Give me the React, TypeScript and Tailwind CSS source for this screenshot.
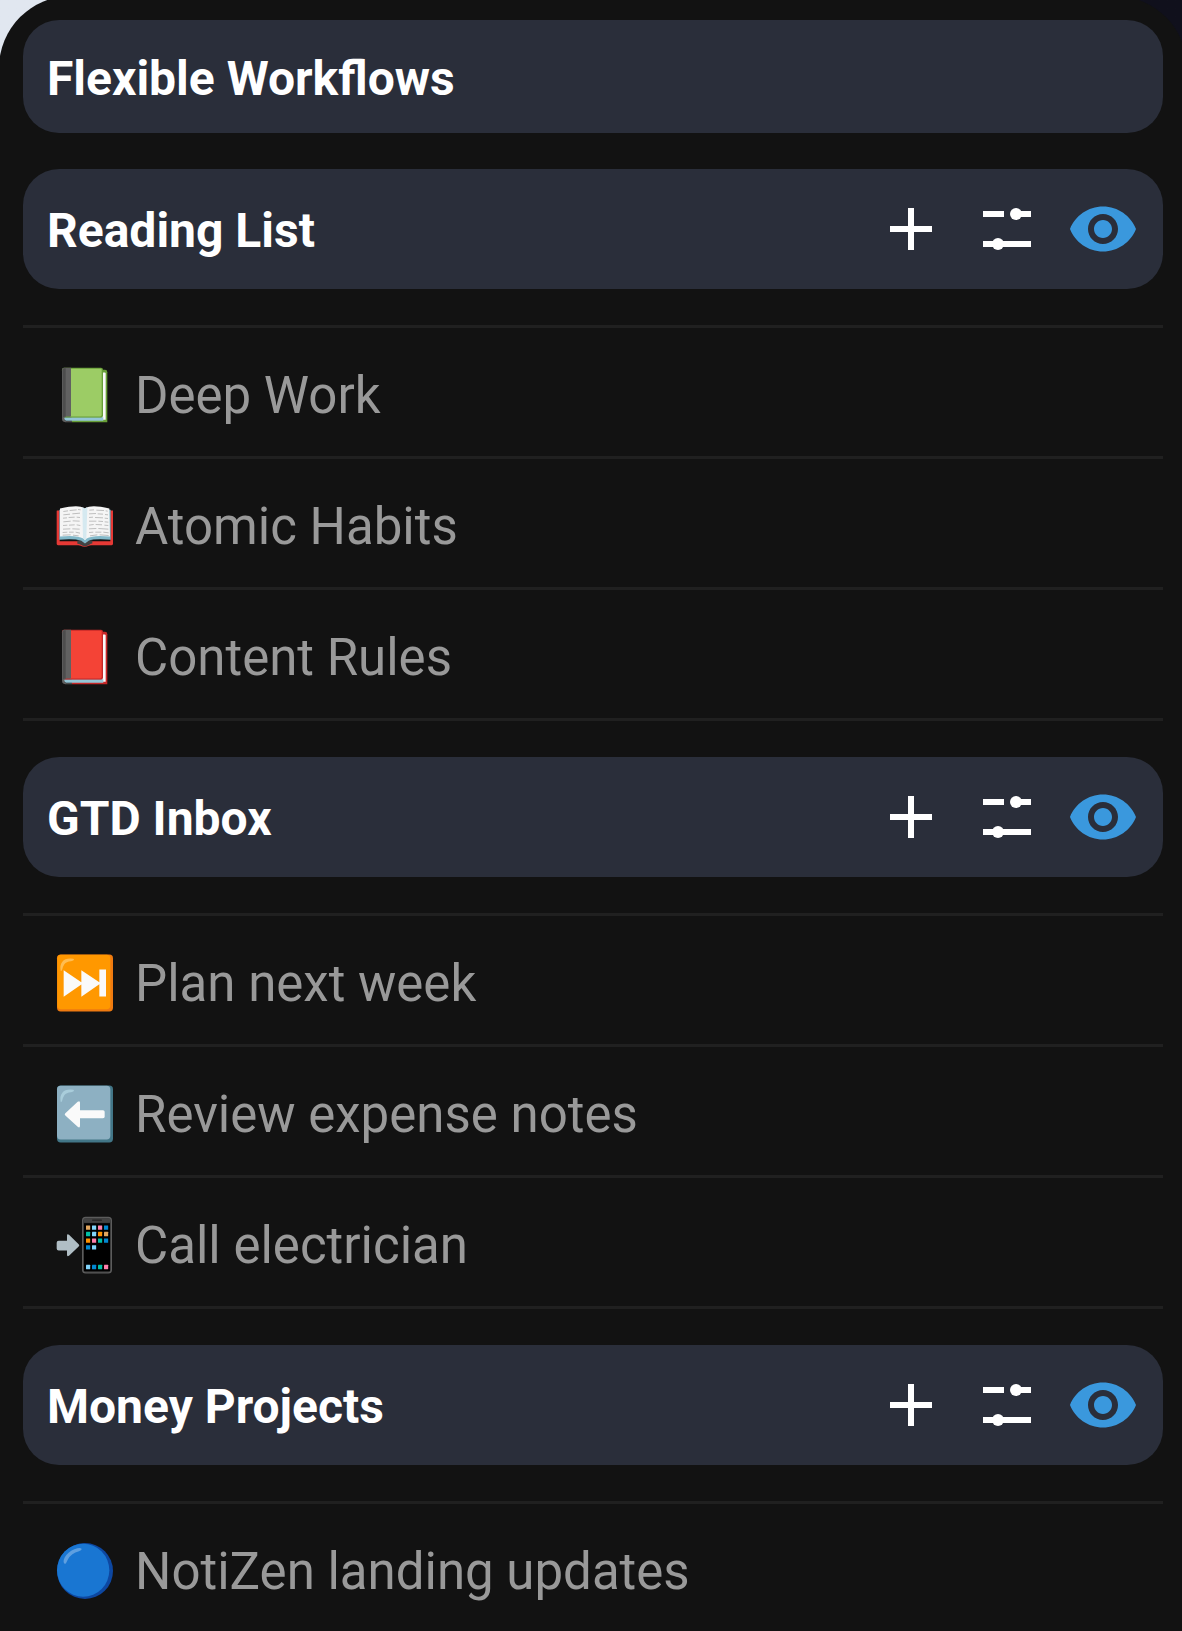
import type { ReactNode } from "react";

type Item = { icon: ReactNode; title: string };
type Section = { title: string; items: Item[] };

const Emoji = ({ top, children }: { top: number; children: ReactNode }) => (
  <svg
    viewBox={`48 ${top} 174 174`}
    className="w-[58px] h-[58px] shrink-0 mt-[5px]"
    aria-hidden="true"
  >
    {children}
  </svg>
);

const Book = ({ cover, edge }: { cover: string; edge: string }) => (
  <Emoji top={46.5}>
    <path d="M80 58h115q7 0 7 7v150H96z" fill={edge} />
    <path d="M187 66h7q3 0 3 4v138h-10z" fill="#fafafa" />
    <path d="M72 200h118v11H78q-6-1-6-6z" fill="#94c6d6" />
    <path d="M72 52h111q6 0 6 6v136q0 7-7 7H74q-8 0-8-6V59q0-7 6-7z" fill={edge} />
    <path d="M90 55h92q3 0 3 4v134q0 5-5 5H90z" fill={cover} />
    <path d="M72 52h21v146H78q-5 0-5 7 0 6 5 7h18v3H76q-10 0-10-10V59q0-7 6-7z" fill="#616161" />
    <path d="M72 53h5v146h-5q-4 2-4 5V59q0-5 4-6z" fill="#4d4d4d" />
  </Emoji>
);

const OpenBook = () => (
  <Emoji top={49.5}>
    <path d="M51 90h8v92h152V90h8v100q0 4-4 4h-62q-4 0-7 2-5 3-12 3t-12-3q-3-2-7-2H54q-4 0-4-4V93q0-3 1-3z" fill="#e53935" />
    <path d="M112 180h45v9q-5 0-9 4-6 4-13 4t-13-4q-4-3-10-3z" fill="#424242" />
    <path d="M58 88l72-5h9l73 5v90q-48-4-66 3l-11 8-11-8q-22-7-66-3z" fill="#82b8c9" />
    <path d="M60 84q45-10 62-5 8 1 12 6 5-5 13-6 18-5 61 5l2 84q-52-5-70 6l-5 5-5-5q-20-11-70-6z" fill="#f5f5f5" />
    <path d="M127 80q5 1 7 5 3-4 8-5l-3 93-5 5-5-5z" fill="#d5e9f0" />
    <g stroke="#b3b3b3" strokeWidth="2.5" fill="none">
      <path d="M70 93l14-2m5-1l21-2m4-1l8 1M70 103l20-2m7-1l23-2M69 113l12-1m5-1l18-1m6 0l10 1M70 124l22-2m6-1l21 1M69 135l13-1m5 0l17-1m6 0l11 2M69 146l22-1m6 0l22 1M68 156l14-1m5 0l14 0m6 0l13 3M68 164l24-1m7 1l17 2" />
      <path d="M148 89l14-1m7 1l23 1m5 1l6 1M147 100l21-1m5 1l16 1m6 1l9 1M147 111l12-1m6 1l24 1m5 1l10 1M147 122l22 0m6 0l14 1m5 1l11 1M147 134l14-2m6 0l19 1m7 1l12 1M147 145l22-1m6 0l30 2M147 156l13-1m6 0l18 0m6 0l16 2M150 166l22-3m7 0l27 2" />
    </g>
  </Emoji>
);

const NextTrack = () => (
  <Emoji top={40.5}>
    <rect x="51" y="42" width="168" height="171" rx="11" fill="#ef7a10" />
    <rect x="52" y="43" width="159" height="163" rx="11" fill="#ff9800" />
    <path d="M62 91q-3-17 5-27 7-10 24-10 11 0 11 3t-9 5q-14 1-20 9-4 6-6 15-3 8-5 5z" fill="#ffbd52" />
    <path d="M71 89l53 36V89l54 36V87h20v81h-20v-37l-54 38v-37l-53 37z" fill="#fafafa" />
  </Emoji>
);

const BackArrow = () => (
  <Emoji top={43.5}>
    <rect x="51" y="45" width="168" height="171" rx="11" fill="#427687" />
    <rect x="51" y="46" width="160" height="161" rx="11" fill="#8db0c2" />
    <path d="M62 94q-3-17 5-27 7-10 24-10 11 0 11 3t-9 5q-14 1-20 9-4 6-6 15-3 8-5 5z" fill="#a9cddb" />
    <path d="M76 128l37-34q7-5 7 3v22h69q5 0 5 5v15q0 4-5 4h-69v23q0 8-7 3l-37-34q-4-4 0-7z" fill="#fafafa" />
  </Emoji>
);

const appTiles: [number, number, string][] = [
  [138, 75, "#e2a65e"], [156, 75, "#81d4fa"], [174, 75, "#ff80ab"], [192, 75, "#0288d1"],
  [138, 94, "#00bfa5"], [156, 94, "#81d4fa"], [174, 94, "#ff9100"], [192, 94, "#e2a65e"],
  [138, 114, "#ff9100"], [156, 114, "#ff80ab"], [174, 114, "#00bfa5"], [192, 114, "#0288d1"],
  [138, 134, "#0288d1"], [156, 134, "#81d4fa"],
  [138, 193, "#81d4fa"], [156, 193, "#0288d1"], [174, 193, "#00bfa5"], [192, 193, "#ff80ab"],
];

const PhoneArrow = () => (
  <Emoji top={46.5}>
    <path d="M56 121h25v-15q0-7 6-3l29 28q4 4 0 7l-29 28q-6 4-6-3v-13H56q-6 0-6-6v-17q0-6 6-6z" fill="#b0bec5" />
    <rect x="128" y="51" width="86" height="166" rx="9" fill="#303030" stroke="#5c5c5c" strokeWidth="4" />
    <rect x="131" y="53" width="80" height="14" rx="5" fill="#424242" />
    <rect x="132" y="68" width="78" height="144" fill="#000" />
    <rect x="156" y="57" width="30" height="4" rx="2" fill="#222" />
    {appTiles.map(([x, y, fill]) => (
      <rect key={`${x}-${y}`} x={x} y={y} width="12.5" height="13" rx="1" fill={fill} />
    ))}
  </Emoji>
);

const BlueCircle = () => (
  <Emoji top={49.5}>
    <circle cx="135" cy="136.5" r="84" fill="#0d47a1" />
    <ellipse cx="129.5" cy="134.5" rx="78.5" ry="79.5" fill="#1976d2" />
    <path d="M73 114q-5-6 1-18 9-17 29-25 17-6 21-2 3 5-7 8-23 6-33 24-4 8-6 12-3 3-5 1z" fill="#5e9fe0" />
  </Emoji>
);

const PlusIcon = () => (
  <svg viewBox="0 0 24 24" className="w-[72px] h-[72px]" fill="#fff">
    <path d="M19 13h-6v6h-2v-6H5v-2h6V5h2v6h6z" />
  </svg>
);

const TuneIcon = () => (
  <svg viewBox="0 0 24 24" className="w-[72px] h-[72px]" fill="#fff">
    <path d="M4 6h7v2H4zM16 6h4v2h-4zM4 16h4v2H4zM10 16h10v2H10z" />
    <circle cx="15" cy="7" r="2" />
    <circle cx="9" cy="17" r="2" />
  </svg>
);

const EyeIcon = () => (
  <svg viewBox="0 0 24 24" className="w-[72px] h-[72px]" fill="#3a98dd">
    <path d="M12 4.5C7 4.5 2.73 7.61 1 12c1.73 4.39 6 7.5 11 7.5s9.27-3.11 11-7.5c-1.73-4.39-6-7.5-11-7.5zM12 17c-2.76 0-5-2.24-5-5s2.24-5 5-5 5 2.24 5 5-2.24 5-5 5zm0-8c-1.66 0-3 1.34-3 3s1.34 3 3 3 3-1.34 3-3-1.34-3-3-3z" />
  </svg>
);

const sections: Section[] = [
  {
    title: "Reading List",
    items: [
      { icon: <Book cover="#9ccc65" edge="#689f38" />, title: "Deep Work" },
      { icon: <OpenBook />, title: "Atomic Habits" },
      { icon: <Book cover="#f44336" edge="#c62828" />, title: "Content Rules" },
    ],
  },
  {
    title: "GTD Inbox",
    items: [
      { icon: <NextTrack />, title: "Plan next week" },
      { icon: <BackArrow />, title: "Review expense notes" },
      { icon: <PhoneArrow />, title: "Call electrician" },
    ],
  },
  {
    title: "Money Projects",
    items: [{ icon: <BlueCircle />, title: "NotiZen landing updates" }],
  },
];

const App = () => {
  return (
    <div className="w-[1182px] h-[1631px] overflow-hidden bg-linear-to-r from-[#e1e7f0] from-50% to-[#10101c] to-50% font-['Roboto',sans-serif]">
      <div className="w-[1188px] h-[1640px] -ml-px -mt-1 px-6 pt-6 rounded-t-[72px] bg-[#121212]">
        <div className="h-[113px] px-6 pt-[5px] flex items-center rounded-[36px] bg-[#2a2e3a]">
          <h1 className="text-[48px] leading-none font-bold text-white">
            Flexible Workflows
          </h1>
        </div>
        {sections.map((section) => (
          <section key={section.title}>
            <div className="my-9 h-[120px] px-6 flex items-center justify-between rounded-[36px] bg-[#2a2e3a]">
              <h2 className="pt-[3px] text-[48px] leading-none font-bold text-white">
                {section.title}
              </h2>
              <div className="flex items-center gap-6">
                <PlusIcon />
                <TuneIcon />
                <EyeIcon />
              </div>
            </div>
            <ul className="border-t-3 border-[#202020]">
              {section.items.map((item) => (
                <li
                  key={item.title}
                  className="h-[131px] pl-[33px] flex items-center gap-[21px] border-b-3 border-[#202020]"
                >
                  {item.icon}
                  <span className="pt-[7px] text-[51px] leading-none text-[#999999] whitespace-nowrap">
                    {item.title}
                  </span>
                </li>
              ))}
            </ul>
          </section>
        ))}
      </div>
    </div>
  );
};

export default App;
